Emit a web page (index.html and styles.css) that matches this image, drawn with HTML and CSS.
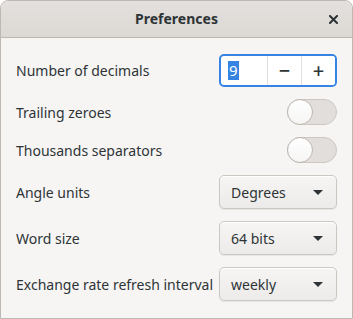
FILE: index.html
```html
<!DOCTYPE html>
<html>
<head>
  <meta name="viewport" content="width=device-width, initial-scale=1">
  <title>Preferences</title>
  <link rel="stylesheet" href="styles.css">
</head>
<body>
  <div class="window">
    <div class="titlebar">
      <span class="title">Preferences</span>
      <button class="close-btn" aria-label="Close">
        <svg width="9" height="9" viewBox="0 0 9 9">
          <path d="M1 1 L8 8 M8 1 L1 8" stroke="#2e3436" stroke-width="2" stroke-linecap="square"/>
        </svg>
      </button>
    </div>

    <div class="prefs">
      <label class="pref-label">Number of decimals</label>
      <div class="spin">
        <div class="spin-entry"><span class="sel">9</span></div>
        <button class="spin-btn">&minus;</button>
        <button class="spin-btn">+</button>
      </div>

      <label class="pref-label">Trailing zeroes</label>
      <div class="switch"><span class="knob"></span></div>

      <label class="pref-label">Thousands separators</label>
      <div class="switch"><span class="knob"></span></div>

      <label class="pref-label">Angle units</label>
      <div class="combo"><span>Degrees</span><span class="arrow"></span></div>

      <label class="pref-label">Word size</label>
      <div class="combo"><span>64 bits</span><span class="arrow"></span></div>

      <label class="pref-label">Exchange rate refresh interval</label>
      <div class="combo"><span>weekly</span><span class="arrow"></span></div>
    </div>
  </div>
</body>
</html>
```

FILE: styles.css
```css
* {
  margin: 0;
  padding: 0;
  box-sizing: border-box;
}

body {
  font-family: 'Noto Sans', 'DejaVu Sans', sans-serif;
  font-size: 14px;
  color: #2e3436;
  background: #ffffff;
  width: 353px;
  height: 319px;
  overflow: hidden;
}

.window {
  width: 353px;
  height: 319px;
  border: 1px solid #bfb8b1;
  border-radius: 8px 8px 0 0;
  background: #f6f5f4;
  overflow: hidden;
  display: flex;
  flex-direction: column;
}

.titlebar {
  height: 37px;
  flex: none;
  position: relative;
  display: flex;
  align-items: center;
  justify-content: center;
  background: linear-gradient(to bottom, #e3e0dd, #dcd8d4);
  border-bottom: 1px solid #bfb8b1;
}

.title {
  font-weight: 700;
  font-size: 14px;
  margin-top: -1px;
}

.close-btn {
  position: absolute;
  right: 8px;
  top: 7px;
  width: 22px;
  height: 22px;
  border: none;
  background: transparent;
  display: flex;
  align-items: center;
  justify-content: center;
}

.prefs {
  display: grid;
  grid-template-columns: 1fr 118px;
  column-gap: 6px;
  row-gap: 12px;
  padding: 16px 15px 0 15px;
  align-items: center;
}

.pref-label {
  white-space: nowrap;
}

.spin {
  height: 33px;
  display: flex;
  border: 2px solid #3584e4;
  border-radius: 5px;
  background: #ffffff;
  overflow: hidden;
}

.spin-entry {
  width: 46px;
  display: flex;
  align-items: center;
  padding-left: 7px;
  font-size: 15px;
}

.sel {
  background: #3584e4;
  color: #ffffff;
  line-height: 19px;
  padding: 0 1px;
}

.spin-btn {
  flex: 1;
  border: none;
  border-left: 1px solid #e1dedb;
  background: #ffffff;
  font-family: inherit;
  font-size: 20px;
  font-weight: 500;
  color: #2e3436;
}

.switch {
  justify-self: end;
  width: 50px;
  height: 26px;
  border: 1px solid #cdc7c2;
  border-radius: 13px;
  background: #e1dedb;
  position: relative;
}

.knob {
  position: absolute;
  left: -1px;
  top: -1px;
  width: 26px;
  height: 26px;
  border-radius: 50%;
  border: 1px solid #bfb8b1;
  background: linear-gradient(to bottom, #ffffff, #f6f5f4);
}

.combo {
  height: 34px;
  display: flex;
  align-items: center;
  justify-content: space-between;
  padding: 0 13px 0 11px;
  border: 1px solid #cdc7c2;
  border-radius: 5px;
  background: linear-gradient(to bottom, #f6f5f4, #edebe9);
  box-shadow: inset 0 1px #ffffff, 0 1px 1px rgba(0, 0, 0, 0.07);
}

.arrow {
  width: 0;
  height: 0;
  border-left: 5px solid transparent;
  border-right: 5px solid transparent;
  border-top: 5px solid #2e3436;
}
```
